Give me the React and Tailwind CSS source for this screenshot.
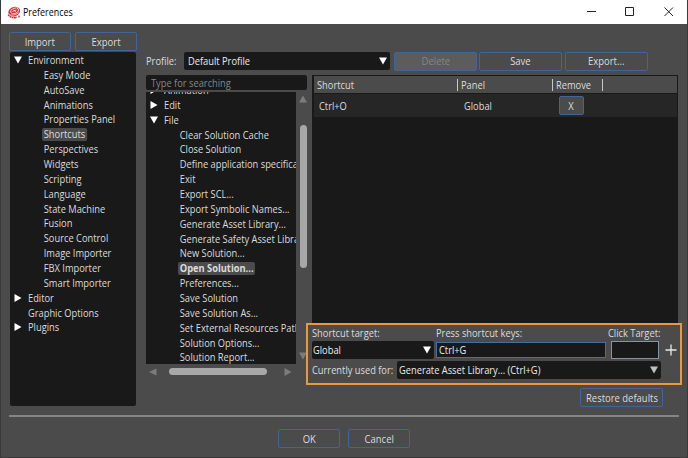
import React from 'react';

const ENVIRONMENT = [
  'Easy Mode',
  'AutoSave',
  'Animations',
  'Properties Panel',
  'Shortcuts',
  'Perspectives',
  'Widgets',
  'Scripting',
  'Language',
  'State Machine',
  'Fusion',
  'Source Control',
  'Image Importer',
  'FBX Importer',
  'Smart Importer',
];

const FILE_ACTIONS = [
  'Clear Solution Cache',
  'Close Solution',
  'Define application specifications...',
  'Exit',
  'Export SCL...',
  'Export Symbolic Names...',
  'Generate Asset Library...',
  'Generate Safety Asset Library...',
  'New Solution...',
  'Open Solution...',
  'Preferences...',
  'Save Solution',
  'Save Solution As...',
  'Set External Resources Path...',
  'Solution Options...',
  'Solution Report...',
];

// Open Sans has no condensed cut here, so labels are narrowed a little
const Label = ({ children, className = 'origin-left scale-x-[0.885]' }) => (
  <span className={`inline-block whitespace-nowrap ${className}`}>{children}</span>
);

const Arrow = ({ dir = 'down', className = 'text-white' }) => {
  const points = {
    down: '0,0.5 8,0.5 4,7.5',
    up: '0,7.5 8,7.5 4,0.5',
    right: '0.5,0 7.5,4 0.5,8',
    left: '7.5,0.5 0,4 7.5,7.5',
  };
  return (
    <svg viewBox="0 0 8 8" className={`w-2 h-2 shrink-0 ${className}`} fill="currentColor">
      <polygon points={points[dir]} />
    </svg>
  );
};

const Logo = () => (
  <svg viewBox="0 0 14 13" className="w-3.5 h-[13px] shrink-0">
    <ellipse cx="7.2" cy="5.6" rx="6" ry="4.7" fill="#e02a38" transform="rotate(-22 7.2 5.6)" />
    <g fill="none" stroke="#fff" strokeWidth="0.7">
      <ellipse cx="7.6" cy="4.8" rx="4.2" ry="2.6" transform="rotate(-22 7.6 4.8)" />
      <path d="M5.6 5.4 9.4 3.9M6.6 3.6l2 2.4" />
      <path d="M1.5 8.1c2 1.8 7 1.2 10.3-1.5" />
    </g>
    <path d="M1.2 8.6c1.6 3 6 3.9 8.8 2.4" fill="none" stroke="#c91f2c" strokeWidth="1.4" strokeDasharray="1.8 0.5" />
    <path d="M12 9.4v2.2" stroke="#8d2a30" strokeWidth="1.2" />
  </svg>
);

const Button = ({ children, className = '' }) => (
  <button className={`h-[19px] shrink-0 rounded-[2px] border border-[#41659a] flex items-center justify-center ${className}`}>
    <Label className="scale-x-[0.9]">{children}</Label>
  </button>
);

const Select = ({ value, className = '', arrow = 'text-white' }) => (
  <div className={`h-[18px] shrink-0 rounded-[2px] bg-[#191919] flex items-center justify-between text-[#ececec] ${className}`}>
    <Label>{value}</Label>
    <Arrow className={arrow} />
  </div>
);

const Branch = ({ label, dir }) => (
  <div className="h-[14.86px] flex items-center pl-1">
    <div className="w-[14px] flex">{dir && <Arrow dir={dir} />}</div>
    <Label>{label}</Label>
  </div>
);

const Leaf = ({ label, selected, bold }) => (
  <div className="h-[14.86px] flex items-center pl-8 whitespace-nowrap">
    <span className={`h-[13px] flex items-center rounded-[2px] px-0.5 origin-left scale-x-[0.885] ${selected ? 'bg-[#4b4b4b]' : ''} ${bold ? 'font-bold' : ''}`}>
      {label}
    </span>
  </div>
);

const TitleBar = () => (
  <div className="h-6 bg-white text-black flex items-center pl-1.5">
    <Logo />
    <Label className="ml-0.5 origin-left scale-x-[0.85]">Preferences</Label>
    <svg viewBox="0 0 96 12" className="w-24 h-3 ml-auto mr-[7px]" fill="none" stroke="#222" strokeWidth="1">
      <path d="M3 5.5h9" />
      <path d="M41.5 1.5h8v8h-8z" />
      <path d="M80.5 1.5l8.5 8.5M89 1.5l-8.5 8.5" />
    </svg>
  </div>
);

const SettingsTree = () => (
  <div className="h-[354px] ml-px w-[126px] rounded-[2px] bg-[#191919] pt-[0.6px]">
    <Branch label="Environment" dir="down" />
    {ENVIRONMENT.map((item) => (
      <Leaf key={item} label={item} selected={item === 'Shortcuts'} />
    ))}
    <Branch label="Editor" dir="right" />
    <Branch label="Graphic Options" />
    <Branch label="Plugins" dir="right" />
  </div>
);

const ActionTree = () => (
  <div className="w-[161px] shrink-0">
    <div className="h-[15px] bg-[#191919] rounded-[2px] flex items-center pl-[5px] text-[#858585]">
      <Label>Type for searching</Label>
    </div>
    <div className="flex mt-0.5">
      <div className="w-[150px] h-[272px] bg-[#191919] overflow-hidden">
        <div className="-mt-[9.5px]">
          <Branch label="Animation" dir="right" />
          <Branch label="Edit" dir="right" />
          <Branch label="File" dir="down" />
          {FILE_ACTIONS.map((item) => (
            <Leaf key={item} label={item} selected={item === 'Open Solution...'} bold={item === 'Open Solution...'} />
          ))}
        </div>
      </div>
      <div className="w-[11px] shrink-0 flex flex-col items-end pt-[3px]">
        <Arrow dir="up" className="text-[#7c7c7c]" />
        <div className="w-[7px] h-[143px] mt-[22px] rounded-full bg-[#a8a8a8]" />
        <Arrow dir="down" className="text-[#7c7c7c] mt-[84px]" />
      </div>
    </div>
    <div className="h-[15px] flex items-center pl-[3px]">
      <Arrow dir="left" className="text-[#7c7c7c]" />
      <div className="w-[98px] h-[7px] ml-3 mr-[17px] rounded-full bg-[#a8a8a8]" />
      <Arrow dir="right" className="text-[#7c7c7c]" />
    </div>
  </div>
);

const ShortcutTable = () => (
  <div className="h-[248px] w-[366px] bg-[#191919] pl-0.5 pr-px pt-px">
    <div className="h-[17px] bg-[#4b4b4b] flex items-center pl-[3px]">
      <div className="w-[140px]"><Label>Shortcut</Label></div>
      <div className="w-[95px] h-3 border-l border-[#c8c8c8] pl-[3px] flex items-center"><Label>Panel</Label></div>
      <div className="w-[51px] h-3 border-x border-[#c8c8c8] pl-[3px] flex items-center"><Label>Remove</Label></div>
    </div>
    <div className="h-[23px] mt-px bg-[#262626] flex items-center pl-[5px]">
      <div className="w-[145px]"><Label>Ctrl+O</Label></div>
      <div className="w-[95px]"><Label>Global</Label></div>
      <Button className="w-[25px] bg-[#4b4b4b]">X</Button>
    </div>
  </div>
);

const ShortcutEditor = () => (
  <div className="w-[376px] h-[62px] -ml-1.5 border-2 border-[#ee963c] bg-[#4b4b4b] pl-1 relative">
    <div className="flex h-4 items-center">
      <div className="w-[124px]"><Label>Shortcut target:</Label></div>
      <div className="w-[172px]"><Label>Press shortcut keys:</Label></div>
      <Label>Click Target:</Label>
    </div>
    <div className="flex h-[18px] items-center">
      <Select value="Global" className="w-[122px] pl-px pr-[3px]" />
      <div className="w-[170px] h-4 ml-0.5 border border-[#44709f] bg-[#191919] text-[#ececec] flex items-center pl-0.5">
        <Label>Ctrl+G</Label>
      </div>
      <div className="w-[48px] h-[18px] ml-[5px] border border-[#8496a6] bg-[#191919]" />
      <svg viewBox="0 0 12 12" className="w-3 h-3 ml-1.5" stroke="#e8e8e8" strokeWidth="1.3">
        <path d="M6 .5v11M.5 6h11" />
      </svg>
    </div>
    <div className="flex h-[18px] mt-0.5 items-center">
      <div className="w-[85px]"><Label>Currently used for:</Label></div>
      <Select value="Generate Asset Library... (Ctrl+G)" className="w-[264px] pl-0.5 pr-[3px]" arrow="text-[#c0c0c0]" />
    </div>
  </div>
);

function App() {
  return (
    <div className="w-[688px] h-[458px] overflow-hidden bg-[#4b4b4b] border-x border-b border-[#3a3a3a] text-[#dcdcdc] text-[10.5px] leading-[14px] font-['Open_Sans',sans-serif]">
      <TitleBar />
      <div className="flex pl-2 pt-2 h-[391px]">
        <div className="w-[137px] shrink-0">
          <div className="flex gap-1 mb-px">
            <Button className="w-[62px]">Import</Button>
            <Button className="w-[62px]">Export</Button>
          </div>
          <SettingsTree />
        </div>
        <div className="flex-1 pt-[19px]">
          <div className="flex h-5 items-center">
            <div className="w-[38px]"><Label>Profile:</Label></div>
            <Select value="Default Profile" className="w-[206px] pl-1 pr-[3px]" />
            <Button className="w-[83px] ml-1 bg-[#5c5c5c] text-[#858585]">Delete</Button>
            <Button className="w-[83px] ml-0.5">Save</Button>
            <Button className="w-[83px] ml-[3px]">Export...</Button>
          </div>
          <div className="flex mt-1 gap-[5px]">
            <ActionTree />
            <div className="w-[370px]">
              <ShortcutTable />
              <ShortcutEditor />
              <Button className="w-[83px] mt-[3px] ml-[268px]">Restore defaults</Button>
            </div>
          </div>
        </div>
      </div>
      <div className="h-0.5 ml-2 w-[670px] bg-[#858585]" />
      <div className="flex gap-2 pl-[277px] mt-3">
        <Button className="w-[62px]">OK</Button>
        <Button className="w-[62px]">Cancel</Button>
      </div>
    </div>
  );
}

export default App;
